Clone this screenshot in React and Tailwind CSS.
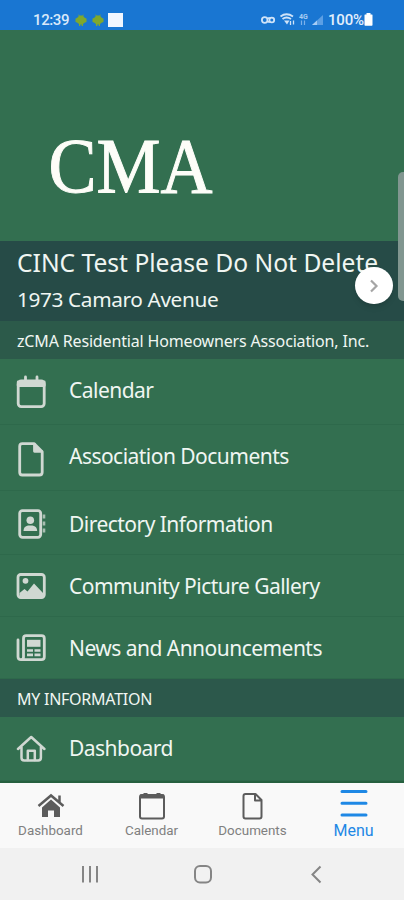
import React from "react";

const sans = "font-['Noto_Sans','Open_Sans',sans-serif]";
const roboto = "font-[Roboto,sans-serif]";

function Droid() {
  return (
    <svg width="12" height="14" viewBox="0 0 12 14" fill="#7fa82d">
      <path d="M3.500 1l1 1.500h3L8.500 1 8.300 3.200 10 5l1.500.5v3.500L10 9.500 8 11v2H6.700v-1.500H5.300V13H4v-2L2 9.500.5 9V5.500L2 5l1.700-1.800z" />
    </svg>
  );
}

function StatusBar() {
  return (
    <header className={`flex h-[30px] shrink-0 items-center bg-[#1976d2] pt-[9px] pl-[33px] text-white ${roboto}`}>
      <span className="w-[42px] text-[15px] leading-5 font-medium tracking-[-0.4px] text-[#d9e9fa]">12:39</span>
      <span className="flex w-[33px] gap-[5px]"><Droid /><Droid /></span>
      <span className="h-[14px] w-[15px] bg-[#f1f6ff]" />
      <svg className="ml-[138px]" width="64" height="18" viewBox="261 11 64 18" fill="none" stroke="#cfe3f8" strokeWidth="1.800">
        <circle cx="264.700" cy="20" r="2.800" />
        <path d="M267.500 18.200h3M267.500 21.800h3" />
        <circle cx="271.800" cy="20" r="2.400" />
        <path d="M280.500 16.500q6-4.500 12.500 0M282.500 19q4-3 8.500 0" />
        <path d="M284 20.500h5.500L287 24.500z" fill="#cfe3f8" stroke="none" />
        <path d="M290.500 21v4m3-4.500v4" strokeWidth="1.300" />
        <text x="299" y="18.500" fontSize="7" fontWeight="700" fill="#a9cdf3" stroke="none" fontFamily="Roboto">4G</text>
        <path d="M301.500 20.500v4.500m3-4.500v4.500" stroke="#7db1ea" strokeWidth="1.200" />
        <path d="M312 25l11-10v10z" fill="#5c9fe4" stroke="none" />
        <path d="M312 25l5-4.500V25z" fill="#a7cdf5" stroke="none" />
      </svg>
      <span className="ml-[3px] text-[15px] leading-5 font-medium tracking-[-0.2px] text-[#e3effc]">100%</span>
      <svg width="9" height="13" viewBox="0 0 9 13" fill="white"><path d="M2.500 0h4v1.500H8q.5 0 .5.500v10q0 .8-.7.800H1.200q-.7 0-.7-.8V2q0-.5.500-.5h1.500z" /></svg>
    </header>
  );
}

const stroke = { fill: "none", stroke: "#d0d8d2", strokeWidth: 2.8, strokeLinejoin: "round", strokeLinecap: "round" };

function CalendarIcon() {
  return (
    <svg width="30" height="34" viewBox="0 0 30 34" {...stroke}>
      <rect x="2.200" y="6" width="26" height="25.600" rx="3" />
      <path d="M2.200 7h26v3.500h-26z" fill="#d0d8d2" />
      <path d="M9.500 2v4m11.500-4v4" />
    </svg>
  );
}
function FileIcon() {
  return (
    <svg width="30" height="36" viewBox="0 0 30 36" {...stroke}>
      <path d="M6.300 2.600h11.700l8.200 8.200v20.400q0 2.800-2.800 2.800H6.300q-2.600 0-2.600-2.800V5.200q0-2.600 2.600-2.600z" />
      <path d="M18.500 3.500v6.800h7" fill="#d0d8d2" />
    </svg>
  );
}
function ContactIcon() {
  return (
    <svg width="30" height="30" viewBox="0 0 30 30" {...stroke}>
      <rect x="3.700" y="1.700" width="21" height="26.600" rx="2.800" />
      <circle cx="14.300" cy="11.300" r="3.800" fill="#d0d8d2" stroke="none" />
      <path d="M7.500 22q0-4.700 4.500-5.500h4.500q4.700.8 4.700 5.500z" fill="#d0d8d2" stroke="none" />
      <path d="M28 5.500v4m0 3v4m0 3v4" strokeWidth="2.600" strokeLinecap="butt" opacity=".75" />
    </svg>
  );
}
function ImageIcon() {
  return (
    <svg width="30" height="26" viewBox="0 0 30 26" {...stroke}>
      <rect x="2" y="1.500" width="26.300" height="23" rx="2.800" />
      <circle cx="9.500" cy="7.800" r="2.900" fill="#d0d8d2" stroke="none" />
      <path d="M3.500 23v-3l5-4 3 2.500 6.500-8L27 20v3z" fill="#d0d8d2" stroke="none" />
    </svg>
  );
}
function NewsIcon() {
  return (
    <svg width="30" height="28" viewBox="0 0 30 28" {...stroke}>
      <path d="M7.500 4.500q0-2.800 2.700-2.800h15.300q2.800 0 2.800 2.800v18.300q0 2.900-2.900 2.900H4.900q-2.900 0-2.900-2.900V6M7.500 4.500v18.500q0 2.700-2.500 2.700" />
      <path d="M11 5.800h13.500v7H11z" fill="#d0d8d2" stroke="none" />
      <path d="M11 16.500h6m1.500 0h6M11 20.800h6m1.500 0h6" strokeWidth="2.700" strokeLinecap="butt" />
    </svg>
  );
}
function HomeIcon() {
  return (
    <svg width="30" height="28" viewBox="0 0 30 28" {...stroke} strokeWidth="2.500">
      <path d="M2 14L15.200 2l13.200 12M5.500 12v10.800q0 2.700 2.700 2.700h14q2.700 0 2.700-2.700V12" />
      <path d="M11.800 25v-9.300h7V25" />
    </svg>
  );
}

function Row({ icon, label, className, text = "" }) {
  return (
    <li className={`flex shrink-0 items-center border-b border-[#2e694b] pl-[16px] ${className}`}>
      {icon}
      <span className={`ml-[23px] text-[21px] leading-7 tracking-[-0.53px] whitespace-nowrap ${text}`}>{label}</span>
    </li>
  );
}

function Tab({ label, children, className = "" }) {
  return (
    <div className={`flex w-[101px] flex-col items-center ${className}`}>
      <div className="flex h-[37px] items-end">{children}</div>
      <span className="pt-px">{label}</span>
    </div>
  );
}

export default function App() {
  return (
    <div className={`relative flex h-[900px] w-[404px] flex-col overflow-hidden bg-[#336f50] text-[#f0f6f2] ${sans}`}>
      <StatusBar />
      <div className="h-[211px] shrink-0 pt-[90px] pl-[46px]">
        <svg width="180" height="100" viewBox="46 120 180 100" fill="#fdfdf8">
          <text x="48.500" y="192" fontSize="78" textLength="164" lengthAdjust="spacingAndGlyphs" fontFamily="'Liberation Serif', serif" stroke="#fdfdf8" strokeWidth="1">CMA</text>
        </svg>
      </div>
      <section className="relative h-[80px] shrink-0 bg-[#264b47] pl-[17px] whitespace-nowrap">
        <h1 className="pt-[6px] text-[24.600px] leading-8">CINC Test Please Do Not Delete</h1>
        <p className="pt-[6px] text-[20.800px] leading-7 tracking-[-0.38px]">1973 Camaro Avenue</p>
        <button className="absolute top-[26px] left-[355px] flex h-[37px] w-[38px] items-center justify-center rounded-full bg-white shadow-md">
          <svg width="10" height="14" viewBox="0 0 10 14" fill="none" stroke="#a5a5a5" strokeWidth="2.200"><path d="M2 1.500L7.500 7 2 12.500" /></svg>
        </button>
      </section>
      <div className="flex h-[38px] shrink-0 items-center bg-[#2c5a4a] pt-[2px] pl-[17px] text-[16px] tracking-[-0.16px] whitespace-nowrap">zCMA Residential Homeowners Association, Inc.</div>
      <ul className="flex flex-col">
        <Row icon={<CalendarIcon />} label="Calendar" className="h-[66px]" text="-mt-[4px]" />
        <Row icon={<FileIcon />} label="Association Documents" className="h-[66px] pt-[2px]" text="-mt-[6px]" />
        <Row icon={<ContactIcon />} label="Directory Information" className="h-[64px] pt-[2px]" />
        <Row icon={<ImageIcon />} label="Community Picture Gallery" className="h-[62px]" />
        <Row icon={<NewsIcon />} label="News and Announcements" className="h-[62px] pt-[1px]" />
      </ul>
      <h2 className="flex h-[38px] shrink-0 items-center bg-[#2c584b] pt-[2px] pl-[17px] text-[16px] tracking-[-0.25px]">MY INFORMATION</h2>
      <ul className="h-[66px] shrink-0 border-b-2 border-[#26603f]">
        <Row icon={<HomeIcon />} label="Dashboard" className="h-[64px]" text="-mt-px" />
      </ul>
      <nav className={`flex h-[65px] shrink-0 bg-[#f9f9f9] text-[13.400px] leading-5 text-[#808080] ${roboto}`}>
        <Tab label="Dashboard">
          <svg className="mb-[1px]" width="28" height="26" viewBox="0 0 28 26" fill="#5c5c5c">
            <path d="M5 14.500l9-8 9 8V24h-6v-6.500h-6V24H5z" />
            <path d="M1.500 13L14 2.500 26.500 13M22.500 2.500v7" fill="none" stroke="#5c5c5c" strokeWidth="2.500" />
          </svg>
        </Tab>
        <Tab label="Calendar">
          <svg width="28" height="28" viewBox="0 0 28 28" fill="none" stroke="#5c5c5c" strokeWidth="2">
            <rect x="2" y="3" width="24" height="23.500" rx="2" /><path d="M2 4.500h24M7.500 1v3M20.500 1v3" strokeWidth="4" />
          </svg>
        </Tab>
        <Tab label="Documents">
          <svg width="22" height="28" viewBox="0 0 22 28" fill="none" stroke="#5c5c5c" strokeWidth="2" strokeLinejoin="round">
            <path d="M3.500 2h10l6 6v16.500q0 2-2 2h-14q-2 0-2-2V4q0-2 2-2zM13 2v6.500h6.500" />
          </svg>
        </Tab>
        <Tab label="Menu" className="text-[16px] text-[#1e88e5]">
          <svg className="mb-[1px]" width="28" height="30" viewBox="0 0 28 30" stroke="#1e88e5" strokeWidth="3" strokeLinecap="round"><path d="M2 2.500h24M2 14.300h24M2 26h24" /></svg>
        </Tab>
      </nav>
      <footer className="flex h-[52px] shrink-0 items-center bg-[#f1f1f1] pl-[80px]">
        <svg width="244" height="24" viewBox="80 862 244 24" fill="none" stroke="#858585" strokeWidth="2">
          <path d="M83 866v16.500M90 866v16.500M97 866v16.500" />
          <rect x="195" y="866" width="16" height="16.500" rx="5" />
          <path d="M320.500 866.500L312.500 874.500L320.500 882.500" />
        </svg>
      </footer>
      <div className="absolute top-[172px] right-0 h-[129px] w-[6px] rounded-l-[5px] bg-[#819690]" />
    </div>
  );
}
